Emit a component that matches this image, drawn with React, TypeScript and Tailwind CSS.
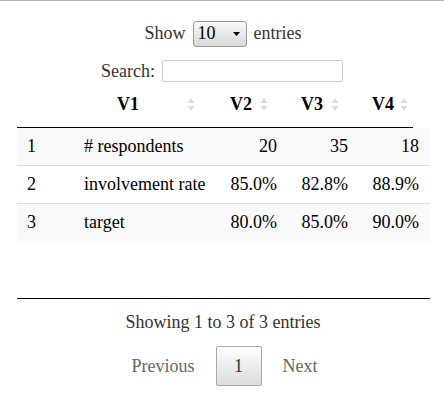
import React from "react";

const ROWS = [
  ["1", "# respondents", "20", "35", "18"],
  ["2", "involvement rate", "85.0%", "82.8%", "88.9%"],
  ["3", "target", "80.0%", "85.0%", "90.0%"],
];

const COLS = "grid-cols-[57px_136px_77px_71px_71px]";

function SortIcon() {
  return (
    <svg width="8" height="15" viewBox="0 0 8 15" className="block">
      <path d="M4 1 L7.5 6 H0.5 Z" fill="#dcdcdc" />
      <path d="M4 14 L7.5 9 H0.5 Z" fill="#dcdcdc" />
    </svg>
  );
}

function Head({ label, pad, gap }: { label: string; pad: string; gap: string }) {
  return (
    <div className={`flex items-center ${pad} ${gap}`}>
      <span className="font-bold">{label}</span>
      <SortIcon />
    </div>
  );
}

export default function App() {
  return (
    <div className="w-[444px] h-[400px] bg-white text-[18px] text-[#333] font-['Liberation_Serif',serif] overflow-hidden">
      <div className="h-px bg-[#b4b4b4]" />

      <div className="flex items-center justify-center gap-[7px] pt-[19px] h-[46px] pl-[2px]">
        <span>Show</span>
        <div className="flex items-center justify-between w-[54px] h-[26px] pl-[4px] pr-[6px] border border-[#9a9a9a] rounded-[3px] bg-gradient-to-b from-[#fafafa] to-[#d9d9d9] text-black">
          <span>10</span>
          <svg width="7" height="4" viewBox="0 0 7 4">
            <path d="M0 0 H7 L3.5 4 Z" fill="#000" />
          </svg>
        </div>
        <span>entries</span>
      </div>

      <div className="flex items-center justify-center gap-[7px] mt-[13px] h-[22px]">
        <span>Search:</span>
        <div className="w-[181px] h-[22px] border border-[#cfcfcf] rounded-[2px] bg-white" />
      </div>

      <div className="ml-[17px] w-[413px]">
        <div className={`grid ${COLS} h-[45px] items-center text-black`}>
          <div />
          <Head label="V1" pad="pl-[43px]" gap="gap-[48px]" />
          <Head label="V2" pad="pl-[20px]" gap="gap-[8px]" />
          <Head label="V3" pad="pl-[14px]" gap="gap-[8px]" />
          <Head label="V4" pad="pl-[14px]" gap="gap-[6px]" />
        </div>
        <div className="w-[396px] h-px bg-black" />

        {ROWS.map((r, i) => (
          <div
            key={i}
            className={`grid ${COLS} items-center text-black ${i % 2 === 0 ? "bg-[#f9f9f9]" : "bg-white"} ${i > 0 ? "h-[38px] border-t border-[#dddddd]" : "h-[37px]"}`}
          >
            <div className="pl-[10px]">{r[0]}</div>
            <div className="pl-[10px] whitespace-nowrap">{r[1]}</div>
            <div className="text-right pr-[10px]">{r[2]}</div>
            <div className="text-right pr-[10px]">{r[3]}</div>
            <div className="text-right pr-[10px]">{r[4]}</div>
          </div>
        ))}

        <div className="w-[413px] h-px bg-black mt-[57px]" />
      </div>

      <div className="text-center mt-[10px] pl-[2px]">Showing 1 to 3 of 3 entries</div>

      <div className="flex items-center justify-center gap-[21px] mt-[10px] pl-[5px]">
        <span className="text-[#666]">Previous</span>
        <div className="w-[46px] h-[40px] flex items-center justify-center border border-[#a9a9a9] rounded-[2px] bg-gradient-to-b from-white to-[#dcdcdc] text-[#333]">
          1
        </div>
        <span className="text-[#666]">Next</span>
      </div>
    </div>
  );
}
